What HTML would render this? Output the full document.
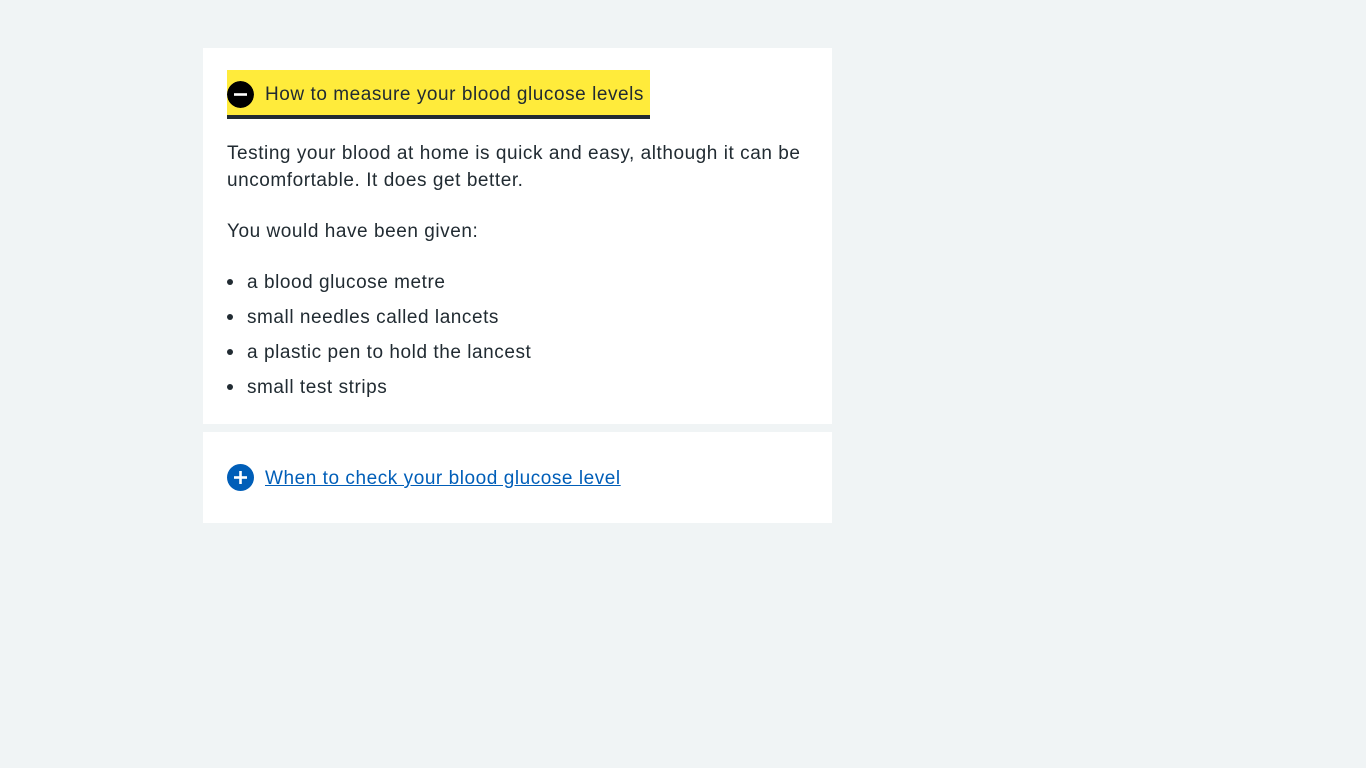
<!DOCTYPE html>
<html><head><style>
body{margin:0;background:#f0f4f5;font-family:"Liberation Sans",sans-serif;color:#212b32;font-size:19px;letter-spacing:0.55px;}
.card{position:absolute;left:203px;width:629px;background:#fff;}
.sum{position:absolute;left:24px;top:22px;height:45px;width:423px;background:#ffeb3b;border-bottom:4px solid #212b32;}
.ic{position:absolute;left:0;top:11px;width:27px;height:27px;border-radius:50%;}
.t{position:absolute;left:38px;top:2px;line-height:46px;white-space:nowrap;}
p,li{position:absolute;left:24px;margin:0;line-height:27px;white-space:nowrap;}
.dot{position:absolute;left:0;top:10px;width:6px;height:6px;border-radius:50%;background:#212b32;}
li{list-style:none;left:44px}
</style></head><body>
<div class="card" style="top:48px;height:376px">
 <div class="sum">
  <svg class="ic" viewBox="0 0 27 27"><circle cx="13.5" cy="13.5" r="13.5" fill="#000"/><rect x="7" y="12.2" width="13" height="2.6" fill="#fff"/></svg>
  <div class="t">How to measure your blood glucose levels</div>
 </div>
 <p style="top:92px">Testing your blood at home is quick and easy, although it can be</p>
 <p style="top:119px">uncomfortable. It does get better.</p>
 <p style="top:170px">You would have been given:</p>
 <ul style="margin:0;padding:0">
 <li style="top:221px"><span class="dot" style="left:-20px"></span>a blood glucose metre</li>
 <li style="top:256px"><span class="dot" style="left:-20px"></span>small needles called lancets</li>
 <li style="top:291px"><span class="dot" style="left:-20px"></span>a plastic pen to hold the lancest</li>
 <li style="top:326px"><span class="dot" style="left:-20px"></span>small test strips</li>
 </ul>
</div>
<div class="card" style="top:432px;height:91px">
 <svg style="position:absolute;left:24px;top:32px;width:27px;height:27px" viewBox="0 0 27 27"><circle cx="13.5" cy="13.5" r="13.5" fill="#005eb8"/><rect x="7" y="12.2" width="13" height="2.6" fill="#fff"/><rect x="12.2" y="7" width="2.6" height="13" fill="#fff"/></svg>
 <div style="position:absolute;left:62px;top:24px;line-height:46px;color:#005eb8;text-decoration:underline;white-space:nowrap">When to check your blood glucose level</div>
</div>
</body></html>
